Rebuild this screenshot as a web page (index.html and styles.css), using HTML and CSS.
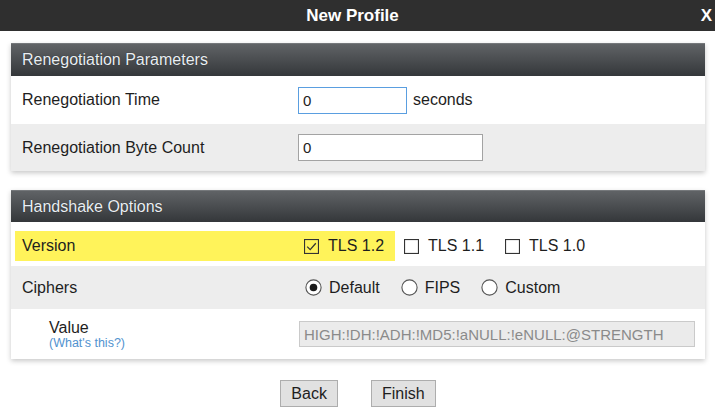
FILE: index.html
```html
<!DOCTYPE html>
<html>
<head>
<meta charset="utf-8">
<title>New Profile</title>
<link rel="stylesheet" href="styles.css">
</head>
<body>
<div class="titlebar">
  <span></span>
  <span class="title">New Profile</span>
  <span class="close">X</span>
</div>
<div class="content">
  <section class="panel">
    <div class="panel-head">Renegotiation Parameters</div>
    <div class="row r1">
      <span class="label">Renegotiation Time</span>
      <div class="ctrl"><input class="text focus" type="text" value="0"><span class="unit">seconds</span></div>
    </div>
    <div class="row r2 alt">
      <span class="label">Renegotiation Byte Count</span>
      <div class="ctrl"><input class="text wide" type="text" value="0"></div>
    </div>
  </section>

  <section class="panel second">
    <div class="panel-head h2">Handshake Options</div>
    <div class="version">
      <div class="hl">
        <span class="label vlabel">Version</span>
        <span class="opt first">
          <svg class="cb" width="15" height="15" viewBox="0 0 15 15"><rect x="0.5" y="0.5" width="14" height="14" fill="none" stroke="#333" stroke-width="1.2"/><path d="M3.2 7.6 L6.2 10.6 L11.8 4.2" fill="none" stroke="#333" stroke-width="1.3"/></svg>
          <span>TLS 1.2</span>
        </span>
      </div>
      <span class="opt second-opt">
        <svg class="cb" width="15" height="15" viewBox="0 0 15 15"><rect x="0.5" y="0.5" width="14" height="14" fill="#fff" stroke="#333" stroke-width="1.2"/></svg>
        <span>TLS 1.1</span>
      </span>
      <span class="opt">
        <svg class="cb" width="15" height="15" viewBox="0 0 15 15"><rect x="0.5" y="0.5" width="14" height="14" fill="#fff" stroke="#333" stroke-width="1.2"/></svg>
        <span>TLS 1.0</span>
      </span>
    </div>
    <div class="row r3 alt">
      <span class="label">Ciphers</span>
      <div class="ctrl radios">
        <span class="opt">
          <svg class="rb" width="17" height="17" viewBox="0 0 17 17"><circle cx="8.5" cy="8.5" r="7.6" fill="#fff" stroke="#555" stroke-width="1.1"/><circle cx="8.5" cy="8.5" r="3.8" fill="#1a1a1a"/></svg>
          <span>Default</span>
        </span>
        <span class="opt">
          <svg class="rb" width="17" height="17" viewBox="0 0 17 17"><circle cx="8.5" cy="8.5" r="7.6" fill="#fff" stroke="#555" stroke-width="1.1"/></svg>
          <span>FIPS</span>
        </span>
        <span class="opt">
          <svg class="rb" width="17" height="17" viewBox="0 0 17 17"><circle cx="8.5" cy="8.5" r="7.6" fill="#fff" stroke="#555" stroke-width="1.1"/></svg>
          <span>Custom</span>
        </span>
      </div>
    </div>
    <div class="row r4">
      <div class="label sub">
        <span class="vname">Value</span>
        <a class="help" href="#">(What's this?)</a>
      </div>
      <div class="ctrl"><input class="text disabled" type="text" value="HIGH:!DH:!ADH:!MD5:!aNULL:!eNULL:@STRENGTH" disabled></div>
    </div>
  </section>

  <div class="buttons">
    <button class="btn">Back</button>
    <button class="btn">Finish</button>
  </div>
</div>
</body>
</html>
```

FILE: styles.css
```css
html, body {
  margin: 0;
  padding: 0;
  background: #fff;
}
body {
  width: 715px;
  height: 418px;
  overflow: hidden;
  font-family: "Liberation Sans", Arial, sans-serif;
  font-size: 16px;
  color: #1e1e1e;
}
.titlebar {
  height: 31px;
  background: #2f2f2f;
  display: grid;
  grid-template-columns: 1fr auto 1fr;
  align-items: center;
  color: #fff;
  font-weight: bold;
  font-size: 17px;
  line-height: 31px;
}
.title {
  padding-right: 10px;
}
.close {
  justify-self: end;
  padding-right: 3px;
}
.content {
  padding: 12px 10px 0 11px;
}
.panel {
  background: #fff;
  box-shadow: 0 2px 5px rgba(0, 0, 0, 0.22);
}
.panel.second {
  margin-top: 19px;
}
.panel-head {
  height: 33px;
  box-sizing: border-box;
  border-top: 1px solid #75787b;
  background: linear-gradient(#606366, #34373a);
  color: #e9eef3;
  padding-left: 11px;
  line-height: 32px;
  text-shadow: 0 0 1px rgba(0, 0, 0, 0.6);
}
.panel-head.h2 {
  height: 32px;
  line-height: 31px;
}
.row {
  display: grid;
  grid-template-columns: 287px 1fr;
  align-items: center;
}
.row.alt {
  background: #ededed;
}
.r1 { height: 48px; }
.r2 { height: 47px; }
.r3 { height: 43px; }
.r4 { height: 50px; }
.label {
  padding-left: 11px;
}
.ctrl {
  display: flex;
  align-items: center;
}
.text {
  box-sizing: border-box;
  height: 27px;
  font-family: "Liberation Sans", Arial, sans-serif;
  font-size: 15px;
  color: #222;
  padding: 0 4px;
  margin: 0;
  border: 1px solid #a3a3a3;
  background: #fff;
  outline: none;
}
.text.focus {
  width: 109px;
  border-color: #5a9ee0;
}
.text.wide {
  width: 185px;
}
.unit {
  margin-left: 6px;
}
.version {
  height: 44px;
  box-sizing: border-box;
  padding: 9px 0 5px 4px;
  display: flex;
  align-items: center;
}
.hl {
  display: flex;
  align-items: center;
  height: 30px;
  background: #fff35a;
  padding-right: 11px;
}
.vlabel {
  box-sizing: border-box;
  width: 283px;
  padding-left: 7px;
}
.opt {
  display: inline-flex;
  align-items: center;
}
.opt .cb {
  margin-right: 9px;
  flex: none;
}
.opt.first {
  margin-left: 6px;
}
.version > .opt {
  margin-left: 21px;
}
.version > .opt.second-opt {
  margin-left: 9px;
}
.radios {
  padding-left: 7px;
}
.radios .opt + .opt {
  margin-left: 21px;
}
.rb {
  margin-right: 7px;
  flex: none;
}
.label.sub {
  padding-left: 38px;
  display: flex;
  flex-direction: column;
  margin-top: 2px;
}
.vname {
  line-height: 17px;
}
.help {
  font-size: 12.5px;
  line-height: 15px;
  color: #5293cf;
  text-decoration: none;
}
.text.disabled {
  width: 396px;
  height: 26px;
  margin-left: 1px;
  background: #ebebeb;
  border-color: #cacaca;
  color: #8a8a8a;
}
.buttons {
  display: flex;
  justify-content: center;
  gap: 33px;
  margin-top: 21px;
}
.btn {
  height: 27px;
  padding: 0 10px;
  font-family: "Liberation Sans", Arial, sans-serif;
  font-size: 16px;
  color: #1e1e1e;
  background: #e1e1e1;
  border: 1px solid #adadad;
  border-radius: 0;
}
```
